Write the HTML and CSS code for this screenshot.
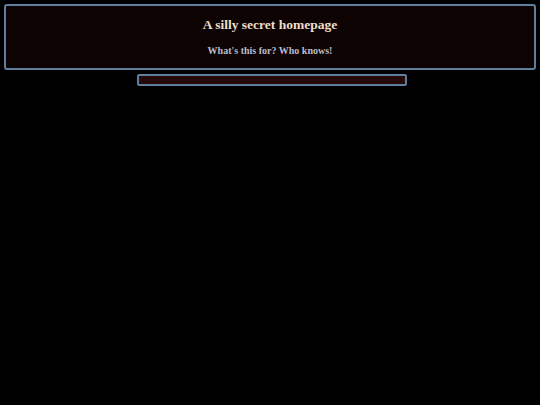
FILE: index.html
```html
<!DOCTYPE html>
<html>
<head>
<meta charset="utf-8">
<link rel="stylesheet" href="styles.css">
</head>
<body>
<header class="banner">
<h1 class="title">A silly secret homepage</h1>
<p class="subtitle">What's this for? Who knows!</p>
</header>
<div class="bar"></div>
</body>
</html>
```
FILE: styles.css
```css
html, body {
  margin: 0;
  padding: 0;
  background: #000;
}
body {
  padding: 4px;
  font-family: "Liberation Serif", "Times New Roman", serif;
}
.banner {
  box-sizing: border-box;
  height: 66px;
  border: 2px solid #5f7e9e;
  border-radius: 3px;
  background: #0e0303;
  text-align: center;
  padding-top: 11px;
}
.title {
  margin: 0;
  font-size: 13.5px;
  font-weight: bold;
  line-height: 16px;
  color: #eadfca;
}
.subtitle {
  margin: 12px 0 0;
  font-size: 10px;
  font-weight: bold;
  line-height: 12px;
  color: #b9bdc9;
}
.bar {
  box-sizing: border-box;
  width: 270px;
  height: 12px;
  margin: 4px 129px 0 133px;
  border: 2px solid #5f7e9e;
  border-radius: 2px;
  background: #250808;
}
```
